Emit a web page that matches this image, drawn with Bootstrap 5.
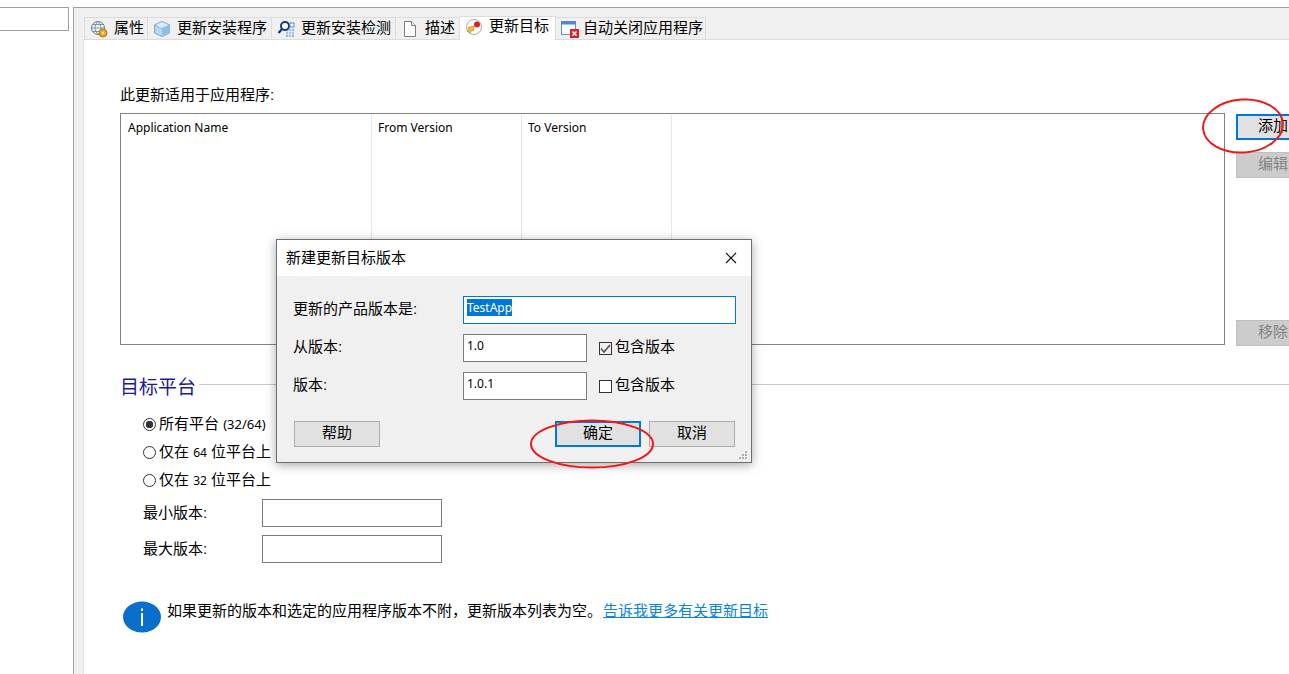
<!DOCTYPE html>
<html lang="zh-CN">
<head>
<meta charset="utf-8">
<title>更新目标</title>
<link href="https://cdn.jsdelivr.net/npm/bootstrap@5.3.0/dist/css/bootstrap.min.css" rel="stylesheet">
<style>
html,body{height:674px;overflow:hidden;background:#fff}
body{font:15px/20px "Liberation Sans","Noto Sans CJK SC",sans-serif;color:#000;position:relative}
.app-shell{height:674px;width:1289px}
.left-pane{width:73px;flex:none;padding-top:7px}
.search-box{width:69px;height:24px;border:1px solid #a0a0a0;border-left:0}
.main-panel{width:1216px;flex:none;border-left:1px solid #a0a0a0;border-top:1px solid #a0a0a0;margin-top:7px;background:#f0f0f0;padding-left:10px;min-width:0}
.tab-strip{height:32px;padding:8px 0 0 1px;align-items:flex-end;border-bottom:1px solid #dcdcdc;margin-left:-1px}
.tab-item{height:22px;border:1px solid #dcdcdc;border-bottom:0;border-left:0;background:#f0f0f0;align-items:center;padding-left:5px;white-space:nowrap;flex:none;gap:6px}
.tab-item:first-child{border-left:1px solid #dcdcdc}
.tab-item svg{flex:none;width:18px;height:18px}
.tab-item span{padding-bottom:2px}
.tab-on{height:24px;background:#fff;margin-bottom:-1px;padding-bottom:4px;position:relative}
.tab-tight{gap:4px}
.tab-body{background:#fff;flex:1;border-left:1px solid #dcdcdc;margin-left:-1px;padding:45px 0 0 36px;overflow:hidden;min-height:0}
.list-wrap{margin-top:8px;height:232px}
.list-box{width:1105px;flex:none;border:1px solid #828282;font:12px/16px "Noto Sans",sans-serif;display:flex;align-items:stretch;padding-top:1px}
.list-col{border-right:1px solid #e6e6e6;padding:5px 0 0 6px}
.list-col:first-child{padding-left:7px}
.side-btns{width:74px;flex:none;margin-left:11px}
.win-btn{height:26px;background:#e1e1e1;border:1px solid #adadad;border-radius:0;padding:0 0 2px;font:15px/20px "Liberation Sans","Noto Sans CJK SC",sans-serif;color:#000;display:flex;align-items:center;justify-content:center;flex:none}
.win-btn.active-btn{border:2px solid #0078d7}
.win-btn.off-btn{background:#ccc;border-color:#bfbfbf;color:#838383}
.side-btns .win-btn{width:74px}
.gap-top{margin-top:1px}
.gap-mid{margin-top:12px}
.gap-end{margin-top:auto;margin-bottom:-1px}
.section-title{margin-top:32px;height:22px;align-items:center;gap:3px}
.section-title span{font-size:19px;line-height:22px;color:#1a1a96;flex:none}
.section-title i{flex:1;height:1px;background:#c8c8c8;margin-top:-7px}
.option-list{margin:11px 0 0 23px}
.opt-row{height:28px;align-items:center;gap:3px;white-space:nowrap}
.opt-row input,.check-row input{appearance:none;margin:0;flex:none;width:13px;height:13px;border:1px solid #333;background:#fff}
.opt-row input{border-radius:50%}
.opt-row input:checked{background:radial-gradient(circle,#333 0 3.5px,#fff 4px)}
.check-row input:checked{background:#f0f0f0 url("data:image/svg+xml,%3Csvg xmlns='http://www.w3.org/2000/svg' viewBox='0 0 13 13'%3E%3Cpath d='M2 6.5 5 10 11 3' fill='none' stroke='%23555' stroke-width='1.6'/%3E%3C/svg%3E") center/13px no-repeat}
.small-latin{font:12px/20px "Noto Sans",sans-serif}
.mid-latin{font:13px/20px "Noto Sans",sans-serif}
.field-row{height:28px;margin-top:8px;align-items:center}
.field-row label{width:119px;flex:none;margin:0}
.win-input{border:1px solid #7a7a7a;background:#fff;height:28px;border-radius:0;padding:1px 3px 0;font:12px/20px "Noto Sans","Noto Sans CJK SC",sans-serif;box-shadow:none;color:#000}
.min-field{width:180px;margin-top:0}
.info-row{margin:38px 0 0 3px;gap:6px}
.info-row svg{flex:none;width:38px;height:32px}
.info-row a{color:#0a84e0;margin-left:1px}
.info-row p{margin:0;white-space:nowrap}
.dlg{position:absolute;left:276px;top:239px;width:476px;height:224px;background:#f0f0f0;border:1px solid #6e6e6e;box-shadow:0 2px 10px rgba(0,0,0,.35)}
.dlg-head{height:36px;background:#fff;padding:0 0 0 9px;align-items:center;justify-content:space-between}
.dlg-close{border:0;background:none;padding:0;width:40px;height:36px;display:flex;align-items:center;justify-content:center}
.dlg-body{padding:20px 15px 0 16px}
.dlg-line{height:28px;align-items:center;margin-bottom:10px}
.dlg-line label{width:170px;flex:none;margin:0;padding-bottom:2px}
.wide-input{width:273px;border-color:#0078d7}
.short-input{width:124px}
.sel-text{background:#0078d7;color:#fff}
.check-row{gap:3px;margin-left:12px;align-items:center;white-space:nowrap}
.check-row span{padding-bottom:2px}
.dlg-btns{margin:21px 1px 0 1px}
.dlg-btns .win-btn{width:86px}
.dlg-btns .ok-btn{margin-left:auto;margin-right:8px}
.grip{position:absolute;right:3px;bottom:2px;width:10px;height:9px}
.red-mark{position:absolute;pointer-events:none;overflow:visible}
.mark-a{left:1202px;top:98px;width:82px;height:56px}
.mark-b{left:530px;top:419px;width:124px;height:50px}
</style>
</head>
<body>
<div class="app-shell d-flex">
  <aside class="left-pane"><div class="search-box"></div></aside>
  <main class="main-panel d-flex flex-column">
    <nav class="tab-strip d-flex">
      <div class="tab-item d-flex" style="width:64px">
        <svg viewBox="0 0 18 18"><circle cx="8" cy="8" r="6.5" fill="#eef3f8" stroke="#6d7f92"/><path d="M1.5 8h13M2.5 4.5h11M2.5 11.5h11M8 1.5c-4 4-4 9 0 13M8 1.5c4 4 4 9 0 13" fill="none" stroke="#6d7f92" stroke-width=".8"/><circle cx="13" cy="13" r="4" fill="#e2a51e" stroke="#b87a10"/><circle cx="13" cy="13" r="1.4" fill="#fbe7a8"/></svg>
        <span>属性</span>
      </div>
      <div class="tab-item d-flex" style="width:124px">
        <svg viewBox="0 0 18 18"><path d="M1.5 5 9 1.5 16.500 5v8L9 16.500 1.500 13z" fill="#b8d8f2" stroke="#7aa8cf"/><path d="M1.500 5 9 8.500 16.500 5 9 1.500z" fill="#dcecf9" stroke="#7aa8cf" stroke-width=".7"/><path d="M9 8.500v8L16.500 13V5z" fill="#8fc0e8"/></svg>
        <span>更新安装程序</span>
      </div>
      <div class="tab-item d-flex" style="width:124px">
        <svg viewBox="0 0 18 18"><rect x="9" y="9" width="8" height="8" fill="#8fb4e8"/><path d="M9 11.700h8M9 14.300h8M11.700 9v8M14.300 9v8" stroke="#fff" stroke-width=".8"/><circle cx="8" cy="6" r="4" fill="#fff" stroke="#123a78" stroke-width="2"/><path d="M5 9 1.500 13" stroke="#123a78" stroke-width="2.200"/><rect x="13" y="3" width="4" height="4" fill="#fff" stroke="#4f86c8"/></svg>
        <span>更新安装检测</span>
      </div>
      <div class="tab-item d-flex" style="width:64px">
        <svg viewBox="0 0 18 18"><path d="M3.500 1.500h7l4 4v11h-11z" fill="#fff" stroke="#7d7d7d"/><path d="M10.500 1.500v4h4" fill="#eee" stroke="#7d7d7d"/></svg>
        <span>描述</span>
      </div>
      <div class="tab-item tab-on d-flex" style="width:96px">
        <svg viewBox="0 0 18 18"><circle cx="9" cy="9" r="7.500" fill="#fff" stroke="#a8a8a8"/><circle cx="12" cy="6.500" r="3" fill="#d8261c"/><path d="M3 9.500 9 8l-.5 5-1.500-1-2 3-2.500-1.500 1.500-3z" fill="#f4b93e" stroke="#c68a1a" stroke-width=".7"/></svg>
        <span>更新目标</span>
      </div>
      <div class="tab-item tab-tight d-flex" style="width:150px">
        <svg viewBox="0 0 18 18"><rect x=".5" y="1.500" width="14" height="13" fill="#fff" stroke="#5f8fd0"/><rect x=".5" y="1.500" width="14" height="3" fill="#4d86d6"/><rect x="9" y="9" width="9" height="9" fill="#d8232a"/><path d="M11.500 11.500l4 4M15.500 11.500l-4 4" stroke="#fff" stroke-width="1.600"/></svg>
        <span>自动关闭应用程序</span>
      </div>
    </nav>
    <section class="tab-body">
      <div>此更新适用于应用程序:</div>
      <div class="list-wrap d-flex">
        <div class="list-box">
          <div class="list-col" style="width:251px">Application Name</div>
          <div class="list-col" style="width:150px">From Version</div>
          <div class="list-col" style="width:150px">To Version</div>
        </div>
        <div class="side-btns d-flex flex-column">
          <button class="win-btn active-btn gap-top" type="button">添加</button>
          <button class="win-btn off-btn gap-mid" type="button">编辑</button>
          <button class="win-btn off-btn gap-end" type="button">移除</button>
        </div>
      </div>
      <div class="section-title d-flex"><span>目标平台</span><i></i></div>
      <div class="option-list">
        <div class="opt-row d-flex"><input type="radio" name="pf" checked><span>所有平台 <span class="mid-latin">(32/64)</span></span></div>
        <div class="opt-row d-flex"><input type="radio" name="pf"><span>仅在 <span class="small-latin">64</span> 位平台上</span></div>
        <div class="opt-row d-flex"><input type="radio" name="pf"><span>仅在 <span class="small-latin">32</span> 位平台上</span></div>
        <div class="field-row d-flex" style="margin-top:5px"><label>最小版本:</label><div class="win-input min-field"></div></div>
        <div class="field-row d-flex"><label>最大版本:</label><div class="win-input min-field"></div></div>
      </div>
      <div class="info-row d-flex">
        <svg viewBox="0 0 38 32"><ellipse cx="19" cy="16" rx="19" ry="15.500" fill="#0a6fcb"/><rect x="18" y="12" width="2" height="13" fill="#fff"/><rect x="18" y="7.500" width="2" height="2.500" fill="#fff"/></svg>
        <p>如果更新的版本和选定的应用程序版本不附，更新版本列表为空。<a href="#">告诉我更多有关更新目标</a></p>
      </div>
    </section>
  </main>
</div>

<div class="dlg">
  <div class="dlg-head d-flex">
    <span>新建更新目标版本</span>
    <button class="dlg-close" type="button" aria-label="关闭"><svg width="12" height="12" viewBox="0 0 12 12"><path d="M1 1l10 10M11 1 1 11" stroke="#111" stroke-width="1.100"/></svg></button>
  </div>
  <div class="dlg-body">
    <div class="dlg-line d-flex"><label>更新的产品版本是:</label><div class="win-input wide-input"><span class="sel-text">TestApp</span></div></div>
    <div class="dlg-line d-flex"><label>从版本:</label><div class="win-input short-input">1.0</div><div class="check-row d-flex"><input type="checkbox" checked><span>包含版本</span></div></div>
    <div class="dlg-line d-flex"><label>版本:</label><div class="win-input short-input">1.0.1</div><div class="check-row d-flex"><input type="checkbox"><span>包含版本</span></div></div>
    <div class="dlg-btns d-flex">
      <button class="win-btn" type="button">帮助</button>
      <button class="win-btn active-btn ok-btn" type="button">确定</button>
      <button class="win-btn" type="button">取消</button>
    </div>
  </div>
  <svg class="grip" viewBox="0 0 10 9"><path d="M7 0h2v2H7zM4 3h2v2H4zM7 3h2v2H7zM1 6h2v2H1zM4 6h2v2H4zM7 6h2v2H7z" fill="#b0b0b0"/></svg>
</div>

<svg class="red-mark mark-a" viewBox="0 0 82 56"><ellipse cx="41" cy="28" rx="40" ry="26.500" fill="none" stroke="#f01818" stroke-width="2" transform="rotate(-4 41 28)"/></svg>
<svg class="red-mark mark-b" viewBox="0 0 124 50"><ellipse cx="62" cy="25" rx="61" ry="23.500" fill="none" stroke="#f01818" stroke-width="2"/></svg>
<script src="https://cdn.jsdelivr.net/npm/bootstrap@5.3.0/dist/js/bootstrap.bundle.min.js"></script>
</body>
</html>
